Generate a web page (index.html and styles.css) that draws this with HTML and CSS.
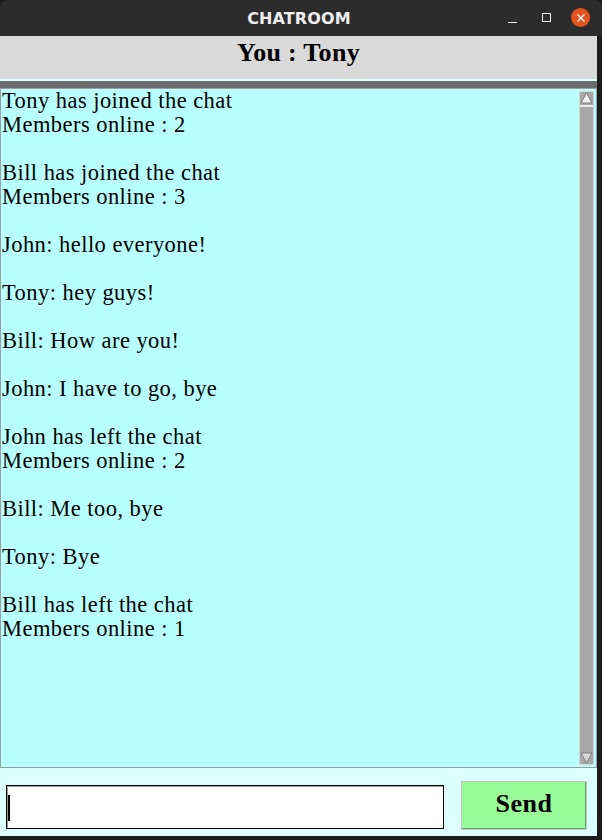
FILE: index.html
```html
<!DOCTYPE html>
<html>
<head>
<meta charset="utf-8">
<link rel="stylesheet" href="styles.css">
</head>
<body>
<div class="window">
  <div class="titlebar">
    <span class="title">CHATROOM</span>
    <div class="controls">
      <span class="ctl min"></span>
      <span class="ctl max"></span>
      <span class="ctl close">
        <svg width="18" height="18" viewBox="0 0 18 18"><path d="M5.5 5.5 L12.5 12.5 M12.5 5.5 L5.5 12.5" stroke="#fff" stroke-width="1.4" fill="none"/></svg>
      </span>
    </div>
  </div>
  <div class="body">
    <div class="content">
      <div class="header">You : Tony</div>
      <div class="sep-light"></div>
      <div class="sep-dark"></div>
      <div class="chat">
        <div class="messages">Tony has joined the chat
Members online : 2

Bill has joined the chat
Members online : 3

John: hello everyone!

Tony: hey guys!

Bill: How are you!

John: I have to go, bye

John has left the chat
Members online : 2

Bill: Me too, bye

Tony: Bye

Bill has left the chat
Members online : 1</div>
        <div class="scrollbar">
          <div class="arrow up"><svg width="13" height="12" viewBox="0 0 13 12"><path d="M6.5 1 L12 11 L1 11 Z" fill="#f4f4f4" stroke="#7c7c7c" stroke-width="1"/></svg></div>
          <div class="slider"></div>
          <div class="arrow down"><svg width="13" height="12" viewBox="0 0 13 12"><path d="M1 1 L12 1 L6.5 11 Z" fill="#d8d8d8" stroke="#7c7c7c" stroke-width="1"/></svg></div>
        </div>
      </div>
      <div class="footer">
        <div class="entry"><span class="cursor"></span></div>
        <button class="send">Send</button>
      </div>
    </div>
    <div class="frame-right"></div>
  </div>
</div>
</body>
</html>
```
FILE: styles.css
```css
html, body {
  margin: 0;
  padding: 0;
  background: #1c1c1c;
}
.window {
  width: 602px;
  height: 840px;
  display: flex;
  flex-direction: column;
  background: #1c1c1c;
}
.titlebar {
  height: 36px;
  flex: none;
  background: #2c2c2c;
  border-radius: 8px 8px 0 0;
  position: relative;
  display: flex;
  align-items: center;
  justify-content: center;
}
.title {
  color: #eeeeee;
  font-family: "DejaVu Sans", "Noto Sans", sans-serif;
  font-weight: bold;
  font-size: 16px;
  letter-spacing: 0.1px;
  margin-left: -4px;
}
.controls {
  position: absolute;
  right: 12px;
  top: 8px;
  display: flex;
  align-items: center;
  gap: 0;
}
.ctl {
  display: block;
}
.min {
  width: 9px;
  height: 1px;
  background: #f0f0f0;
  margin-top: 10px;
  margin-right: 25px;
  margin-left: 1px;
}
.max {
  width: 7px;
  height: 7px;
  border: 1px solid #f0f0f0;
  margin-right: 20px;
}
.close {
  width: 19px;
  height: 19px;
  border-radius: 50%;
  background: #e5531d;
  display: flex;
  align-items: center;
  justify-content: center;
}
.close svg { display: block; }
.body {
  display: flex;
  height: 800px;
  flex: none;
}
.content {
  width: 597px;
  display: flex;
  flex-direction: column;
}
.frame-right {
  flex: 1;
  background: #1c1c1c;
}
.header {
  height: 43px;
  background: #d9d9d9;
  text-align: center;
  font-family: "Liberation Serif", serif;
  font-weight: bold;
  font-size: 26px;
  letter-spacing: 0.3px;
  line-height: 33px;
  color: #000;
}
.sep-light {
  height: 2px;
  background: #dcffff;
}
.sep-dark {
  height: 7px;
  background: #6b6b6b;
}
.chat {
  height: 680px;
  background: #b8ffff;
  border: 1px solid #9c9c9c;
  box-sizing: border-box;
  display: flex;
}
.messages {
  flex: 1;
  white-space: pre;
  font-family: "Liberation Serif", serif;
  font-size: 22.5px;
  letter-spacing: 0.45px;
  line-height: 24px;
  color: #000;
  padding: 0 0 0 1px;
}
.scrollbar {
  width: 13px;
  margin: 2px 2px 2px 0;
  background: #a8a8a8;
  border: 1px solid #d4d4d4;
  display: flex;
  flex-direction: column;
}
.arrow {
  height: 12px;
  display: flex;
  justify-content: center;
}
.arrow svg { display: block; }
.slider {
  flex: 1;
  border-top: 2px solid #ececec;
  background: #a8a8a8;
  margin-top: 1px;
  margin-bottom: 1px;
}
.footer {
  flex: 1;
  background: #dcffff;
  display: flex;
  align-items: flex-start;
  padding: 13px 0 0 6px;
  gap: 17px;
  box-sizing: border-box;
}
.entry {
  width: 438px;
  height: 44px;
  margin-top: 4px;
  box-sizing: border-box;
  border: 1px solid #000;
  box-shadow: inset 1px 1px 0 #a0a0a0;
  background: #fff;
  display: flex;
  align-items: center;
  padding-left: 1px;
}
.cursor {
  width: 2px;
  height: 26px;
  background: #000;
  margin-top: 2px;
}
.send {
  width: 126px;
  height: 49px;
  background: #98fb98;
  border: 1px solid #c4c4c4;
  box-shadow: inset -1px -1px 0 #63a863;
  font-family: "Liberation Serif", serif;
  font-weight: bold;
  font-size: 26px;
  letter-spacing: 0.5px;
  color: #000;
  padding: 0 0 4px 0;
  margin: 0;
}
```
